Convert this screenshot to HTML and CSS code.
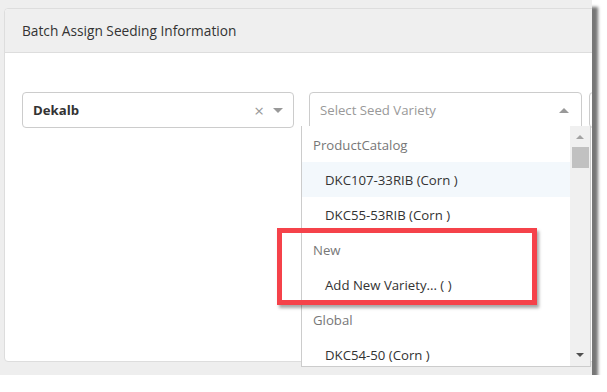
FILE: index.html
```html
<!DOCTYPE html>
<html lang="en">
<head>
    <meta charset="UTF-8">
    <title>Batch Assign Seeding Information</title>
    <link rel="stylesheet" href="styles.css">
</head>
<body>
    <div class="shot">
        <div class="panel">
            <div class="panel-head">Batch Assign Seeding Information</div>
            <div class="panel-body">
                <div class="select">
                    <span class="value">Dekalb</span>
                    <span class="clear">&times;</span>
                    <span class="caret down"></span>
                </div>
                <div class="select open">
                    <span class="placeholder">Select Seed Variety</span>
                    <span class="caret up"></span>
                </div>
                <div class="select"></div>
            </div>
        </div>

        <div class="dropdown">
            <ul class="options">
                <li class="group">ProductCatalog</li>
                <li class="item active">DKC107-33RIB (Corn )</li>
                <li class="item">DKC55-53RIB (Corn )</li>
                <li class="group">New</li>
                <li class="item">Add New Variety... ( )</li>
                <li class="group">Global</li>
                <li class="item">DKC54-50 (Corn )</li>
            </ul>
            <div class="scrollbar">
                <span class="sb-arrow up"></span>
                <span class="thumb"></span>
                <span class="sb-arrow down"></span>
            </div>
        </div>

        <div class="callout"></div>
    </div>
</body>
</html>
```

FILE: styles.css
```css
body {
    margin: 0;
    background: #fff;
    font-family: 'Open Sans', 'Noto Sans', sans-serif;
    color: #333;
}
.shot {
    position: relative;
    width: 592px;
    height: 375px;
    background: #eee;
    box-shadow: 6px 7px 3px #777;
    overflow: hidden;
}
.panel {
    margin: 8px 0 0 4px;
    width: 620px;
    height: 352px;
    background: #fff;
    border: 1px solid #ddd;
    border-radius: 4px;
}
.panel-head {
    height: 43px;
    line-height: 43px;
    padding-left: 17px;
    background: #efefef;
    border-bottom: 1px solid #ddd;
    border-radius: 4px 4px 0 0;
    font-size: 13.7px;
}
.panel-body {
    display: flex;
    gap: 15px;
    padding: 39px 0 0 17px;
}
.select {
    position: relative;
    box-sizing: border-box;
    flex: none;
    width: 272px;
    height: 36px;
    border: 1px solid #ccc;
    border-radius: 4px;
    display: flex;
    align-items: center;
    padding: 0 10px;
    font-size: 13.2px;
}
.select.open {
    width: 273px;
    border-radius: 4px 4px 0 0;
}
.select:last-child {
    margin-left: -8px;
}
.value {
    font-weight: bold;
    flex: 1;
}
.placeholder {
    color: #999;
    flex: 1;
}
.clear {
    color: #999;
    font-size: 17px;
    margin-right: 9px;
}
.caret {
    width: 0;
    height: 0;
    border-left: 5px solid transparent;
    border-right: 5px solid transparent;
}
.caret.down {
    border-top: 5px solid #999;
}
.caret.up {
    border-bottom: 5px solid #999;
    margin-right: 2px;
}
.dropdown {
    position: absolute;
    left: 301px;
    top: 126px;
    width: 290px;
    height: 241px;
    box-sizing: border-box;
    background: #fff;
    border: 1px solid #ccc;
    border-top: none;
    display: flex;
    overflow: hidden;
}
.options {
    flex: 1;
    list-style: none;
    margin: 0;
    padding: 1px 0 0;
    font-size: 13.2px;
}
.options li {
    height: 35px;
    line-height: 37px;
}
.group {
    padding-left: 11px;
    color: #777;
}
.item {
    padding-left: 23px;
    color: #333;
}
.item.active {
    background: #f3f8fc;
}
.scrollbar {
    width: 20px;
    background: #f0f0f0;
    display: flex;
    flex-direction: column;
    align-items: center;
}
.sb-arrow {
    width: 0;
    height: 0;
    border-left: 4px solid transparent;
    border-right: 4px solid transparent;
}
.sb-arrow.up {
    margin-top: 9px;
    border-bottom: 4px solid #a3a3a3;
}
.sb-arrow.down {
    margin-top: auto;
    margin-bottom: 9px;
    border-top: 4px solid #505050;
}
.thumb {
    margin-top: 8px;
    width: 17px;
    height: 21px;
    background: #c1c1c1;
}
.callout {
    position: absolute;
    left: 277px;
    top: 228px;
    width: 250px;
    height: 67px;
    border: 5px solid #f5424a;
    box-shadow: 2px 3px 3px rgba(0, 0, 0, 0.35);
}
```
